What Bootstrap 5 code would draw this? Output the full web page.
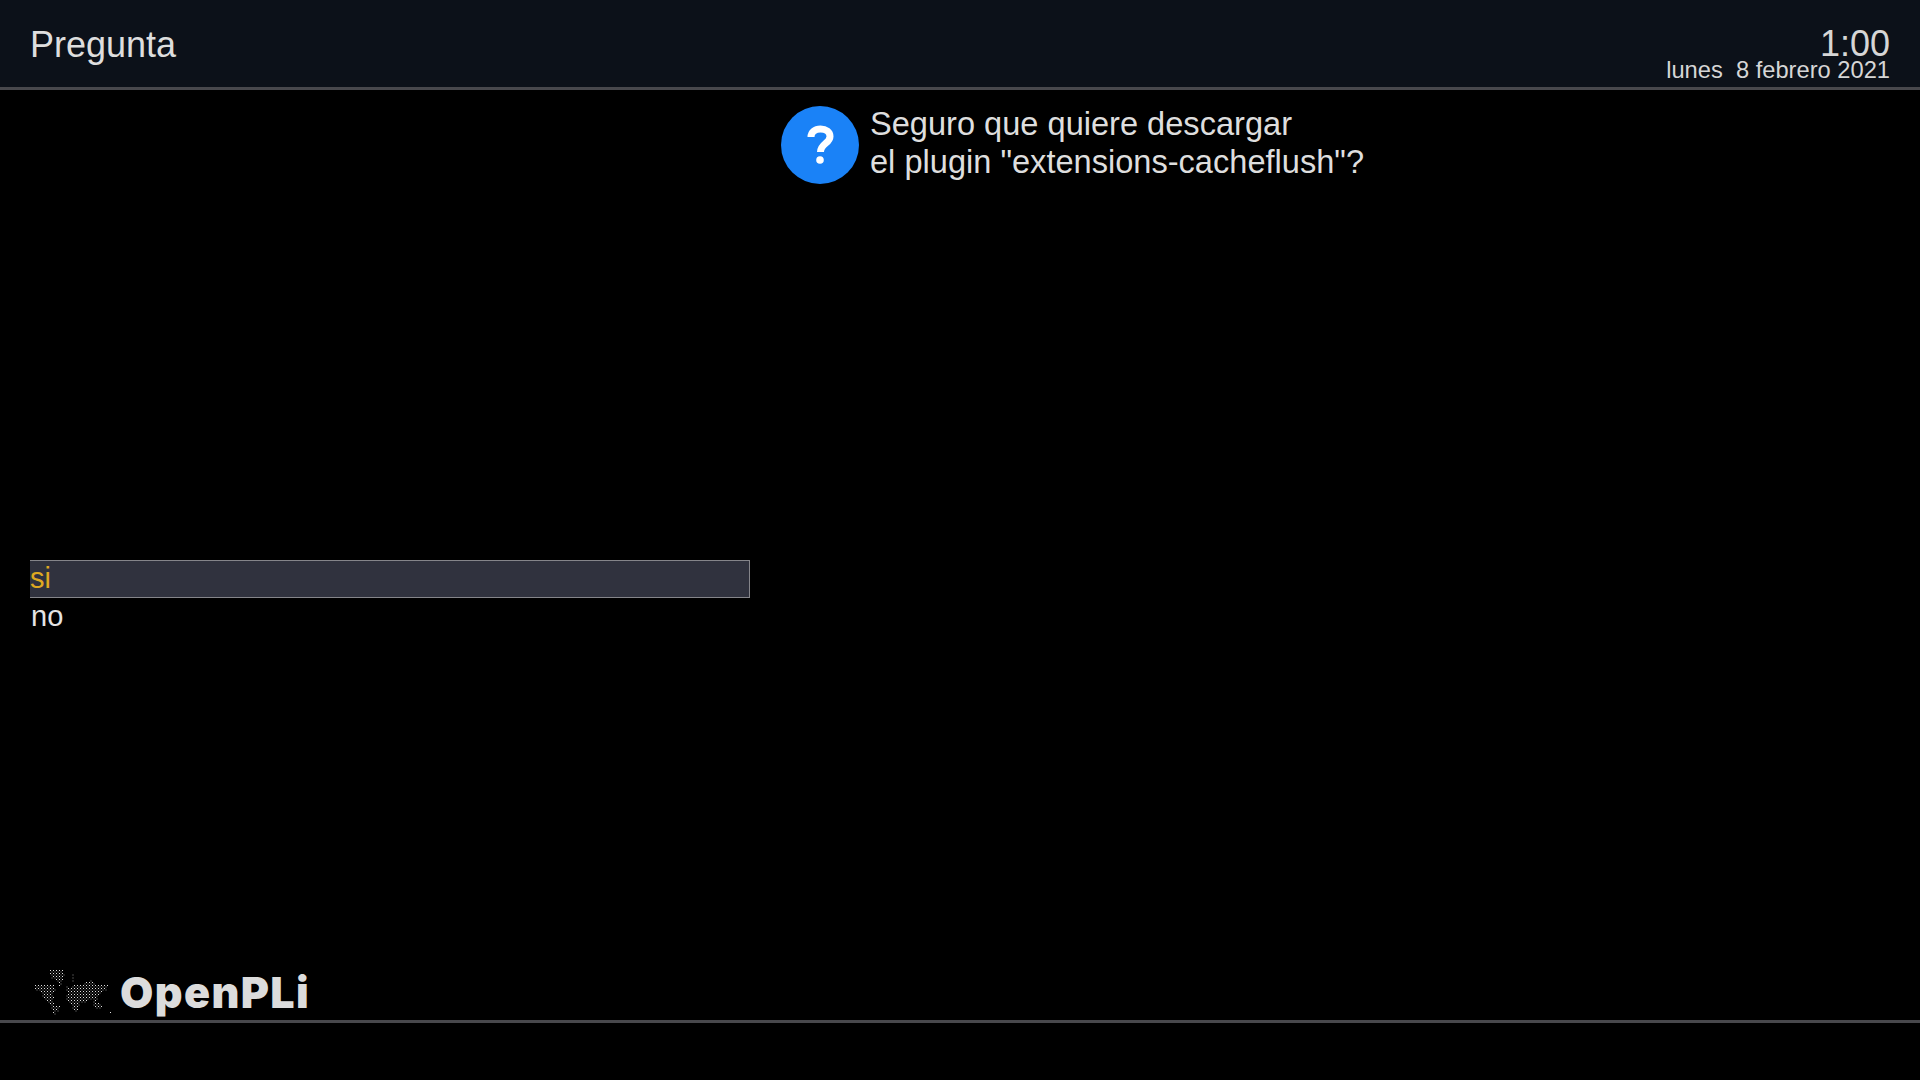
<!DOCTYPE html>
<html lang="es">
<head>
  <meta charset="UTF-8">
  <meta name="viewport" content="width=device-width, initial-scale=1.0" />
  <title>Pregunta</title>
  <link href="https://cdn.jsdelivr.net/npm/bootstrap@5.3.0/dist/css/bootstrap.min.css" rel="stylesheet">
  <style>
    body {
      background: #000;
      color: #e4e4e4;
      font-family: "Liberation Sans", Arial, sans-serif;
      height: 100vh;
      overflow: hidden;
    }

    .top-bar {
      height: 90px;
      background: #0c1119;
      border-bottom: 3px solid #48484c;
      padding: 0 30px;
    }

    .screen-title {
      font-size: 36px;
      line-height: 1;
      color: #dedede;
      margin-top: 27px;
    }

    .clock-box {
      text-align: right;
      color: #d6d6d6;
      margin-top: 30px;
    }

    .clock-time {
      font-size: 36px;
      line-height: 28px;
    }

    .clock-date {
      font-size: 23.7px;
      line-height: 24px;
      white-space: pre;
    }

    .main-area {
      height: 930px;
    }

    .left-side {
      width: 781px;
      padding-left: 30px;
    }

    .choice-list {
      width: 720px;
      margin-top: 470px;
    }

    .choice-row {
      height: 38px;
      font-size: 29px;
      line-height: 36px;
      padding-left: 1px;
    }

    .choice-active {
      background: #30323e;
      border: solid #85858a;
      border-width: 1px 1px 1px 0;
      color: #dfa921;
      line-height: 34px;
      padding-left: 0;
    }

    .logo-box {
      height: 52px;
    }

    .logo-map {
      width: 84px;
      height: 48px;
      margin-left: 2px;
      margin-top: 2px;
    }

    .logo-text {
      font-family: Inter, "Liberation Sans", sans-serif;
      font-weight: 900;
      font-size: 43px;
      line-height: 48px;
      letter-spacing: 1.4px;
      color: #dcdcdc;
      margin-left: 4px;
    }

    .question-icon {
      width: 78px;
      height: 78px;
      margin-top: 16px;
    }

    .question-text {
      font-size: 32.6px;
      line-height: 38px;
      margin-top: 15px;
      margin-left: 11px;
      color: #dedede;
    }

    .bottom-bar {
      border-top: 3px solid #48484c;
      height: 60px;
    }
  </style>
</head>

<body>
  <div class="top-bar d-flex justify-content-between">
    <div class="screen-title">Pregunta</div>
    <div class="clock-box">
      <div class="clock-time">1:00</div>
      <div class="clock-date">lunes  8 febrero 2021</div>
    </div>
  </div>

  <div class="main-area d-flex">
    <div class="left-side d-flex flex-column justify-content-between">
      <div class="choice-list">
        <div class="choice-row choice-active">si</div>
        <div class="choice-row">no</div>
      </div>
      <div class="logo-box d-flex align-items-start">
        <svg class="logo-map" id="world-map" viewBox="0 0 84 48"></svg>
        <div class="logo-text">OpenPLi</div>
      </div>
    </div>
    <div class="d-flex align-items-start">
      <svg class="question-icon" viewBox="0 0 78 78">
        <circle cx="39" cy="39" r="39" fill="#1a82f7"/>
        <path d="M30 31c0-5 4-8 9.500-8 5.500 0 9.500 3 9.500 7.500 0 7-9.500 7-9.500 15.500" fill="none" stroke="#fff" stroke-width="7"/>
        <circle cx="39" cy="54" r="3.800" fill="#fff"/>
      </svg>
      <div class="question-text">Seguro que quiere descargar<br>el plugin "extensions-cacheflush"?</div>
    </div>
  </div>

  <div class="bottom-bar"></div>

  <script>
    // dotted world map, each row is a list of from-to x ranges
    const mapRows = [
      [[17, 30]], [[17, 32], [40, 41]], [[19, 30], [40, 41]], [[24, 30], [40, 41], [58, 59]],
      [[26, 29], [52, 62]], [[2, 22], [26, 27], [34, 35], [40, 76]], [[2, 23], [34, 74]],
      [[9, 22], [36, 70]], [[10, 20], [34, 66]], [[12, 22], [34, 65]], [[15, 20], [36, 54], [61, 64]],
      [[18, 22], [38, 47], [61, 68]], [[19, 27], [40, 46], [63, 69]], [[21, 26], [42, 45]], [[21, 23], [77, 78]]
    ];
    const map = document.getElementById("world-map");
    let dots = "";
    const addDot = (x, y, fill) => {
      dots += `<rect x="${x}" y="${y}" width="1" height="1" fill="${fill}"/>`;
    };
    mapRows.forEach((spans, r) => {
      spans.forEach(([a, b]) => {
        for (let c = a; c <= b; c++) {
          if (c % 3 === 0) {
            addDot(c, r * 3, "#e0e0e0");
          }
          if (c % 3 === 1 && c < b) {
            addDot(c + 0.5, r * 3 + 1.5, "#8a8a8a");
          }
        }
      });
    });
    map.innerHTML = dots;
  </script>
  <script src="https://cdn.jsdelivr.net/npm/bootstrap@5.3.0/dist/js/bootstrap.bundle.min.js"></script>
</body>
</html>
